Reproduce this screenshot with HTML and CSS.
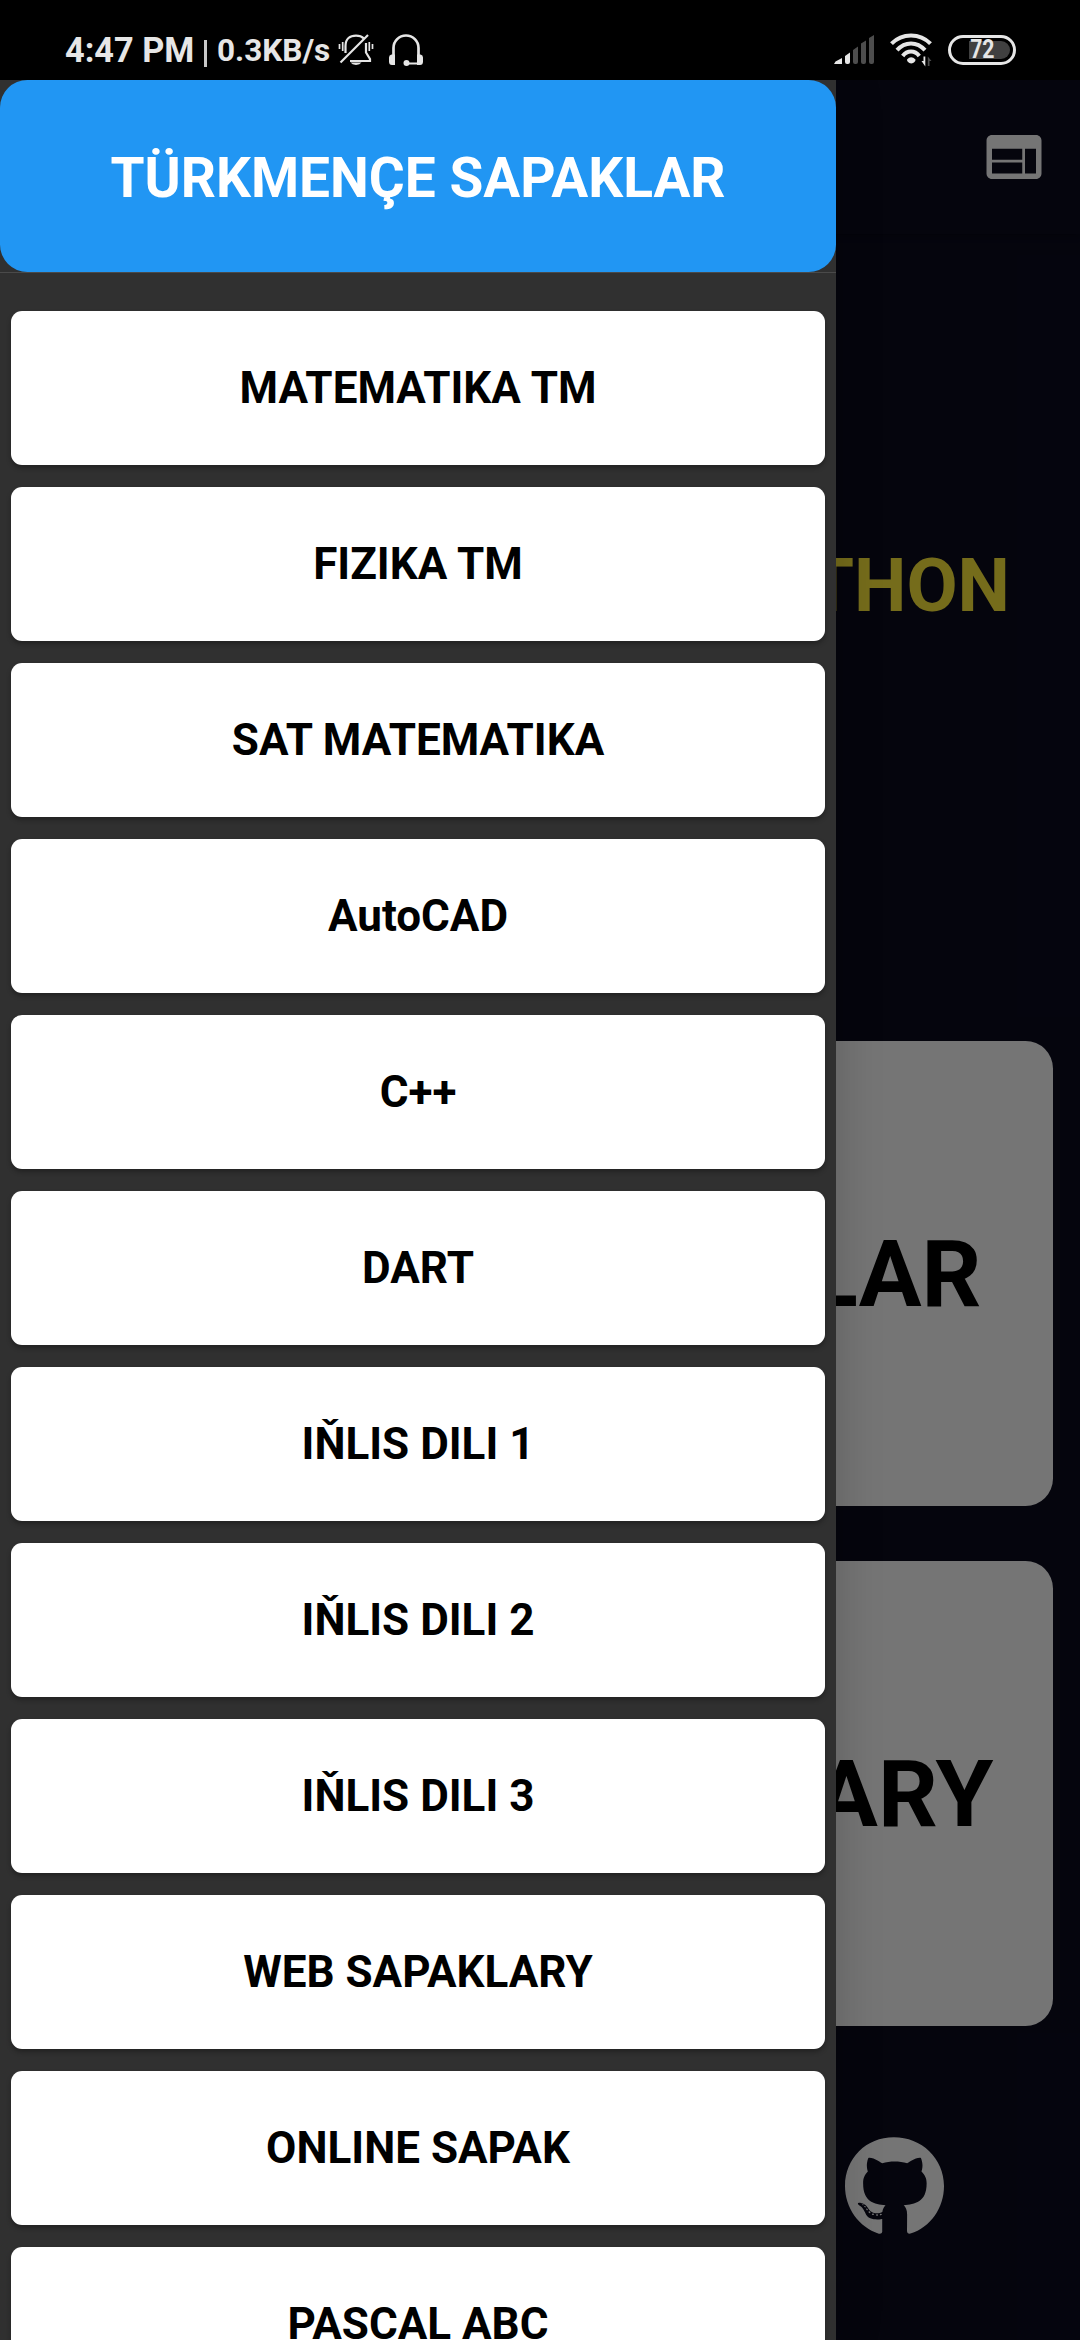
FILE: index.html
```html
<!DOCTYPE html>
<html lang="tk">
<head>
<meta charset="utf-8">
<title>Türkmençe sapaklar</title>
<link rel="stylesheet" href="styles.css">
</head>
<body>
<div class="phone">
  <header class="status">
    <span class="clock">4:47 PM</span>
    <span class="bar"></span>
    <span class="speed">0.3KB/s</span>
    <svg class="bell" viewBox="0 0 36 34" fill="none" stroke="#e6e6e6" stroke-width="2.2">
      <path d="M7.500 20V13C7.500 5.500 12 2.600 18 2.600c3.500 0 6 1 7.800 2.800M28 10v9.500l4 6.500v2H12"/>
      <path d="M2.500 29.500 30 2"/>
      <path d="M1.500 11v5M4.700 9v9M31.300 9v9M34.500 11v5" stroke-width="1.700"/>
      <path d="M12.500 29.500h11a6 4 0 0 1-11 0z" fill="#e6e6e6" stroke="none"/>
    </svg>
    <svg class="headset" viewBox="0 0 36 34" fill="none" stroke="#e6e6e6" stroke-width="2.700">
      <path d="M5.500 24V15a12.500 12.500 0 0 1 25 0v9"/>
      <path d="M18 30.500h12" stroke-width="2"/>
      <path d="M1 24.500q0-2.500 2.500-3H7V32H4q-3 0-3-3.500zM35 24.500q0-2.500-2.500-3H29V32h3q3 0 3-3.500z" fill="#e6e6e6" stroke="none"/>
      <circle cx="18.500" cy="30" r="3" fill="#e6e6e6" stroke="none"/>
    </svg>
    <span class="grow"></span>
    <svg class="signal" viewBox="0 0 40 30">
      <path fill="#e6e6e6" d="M0 29 1.500 26.500 8 23v6zM11 21l5-3.500V27q0 2-2 2h-1q-2 0-2-2z"/>
      <path fill="#4d4d4d" d="M19 15l5-3.500V27q0 2-2 2h-1q-2 0-2-2zM27 8.500l5-3V27q0 2-2 2h-1q-2 0-2-2zM35 3l5-3v27q0 2-2 2h-1q-2 0-2-2z"/>
    </svg>
    <svg class="wifi" viewBox="0 0 42 34" fill="none" stroke="#e6e6e6" stroke-width="4">
      <path d="M1.500 10.700Q9.500 2.500 21 2.500t19.500 8.200M7 17.200q6-6.700 14-6.700t14 6.700M12.700 23q3.300-4.500 8.300-4.500t8.300 4.500"/>
      <path d="M17 26.500q4-4.500 8.500 0 0 3-4.250 4Q17 29.500 17 26.500z" fill="#e6e6e6" stroke="none"/>
      <path d="M35.300 23.500v10L31.500 28h2v-4.500z" fill="#e6e6e6" stroke="none"/>
      <path d="M37.800 33v-9.500L41.500 28h-2v5z" fill="#4d4d4d" stroke="none"/>
    </svg>
    <div class="battery"><span class="charge"></span><span class="level">72</span></div>
  </header>

  <div class="app">
    <main class="home">
      <div class="appbar">
        <svg class="web" viewBox="0 0 24 24"><path fill="#fff" d="M20 4H4c-1.100 0-1.990.9-1.990 2L2 18c0 1.100.9 2 2 2h16c1.100 0 2-.9 2-2V6c0-1.100-.9-2-2-2zm-5 14H4v-4h11v4zm0-5H4V9h11v4zm5 5h-4V9h4v9z"/></svg>
      </div>
      <div class="banner">THON</div>
      <div class="tile tile-lessons">LAR</div>
      <div class="tile tile-books">ARY</div>
      <div class="links">
        <svg class="github" viewBox="0 8 496 484"><path fill="#fff" d="M165.900 397.400c0 2-2.300 3.600-5.200 3.600-3.300.3-5.600-1.300-5.600-3.600 0-2 2.300-3.600 5.200-3.600 3-.3 5.600 1.300 5.600 3.600zm-31.100-4.500c-.7 2 1.300 4.300 4.300 4.900 2.600 1 5.600 0 6.200-2s-1.300-4.300-4.300-5.200c-2.600-.7-5.500.3-6.200 2.300zm44.200-1.700c-2.900.7-4.900 2.600-4.600 4.900.3 2 2.900 3.300 5.900 2.600 2.900-.7 4.900-2.600 4.600-4.600-.3-1.900-3-3.200-5.900-2.900zM244.800 8C106.100 8 0 113.300 0 252c0 110.900 69.800 205.800 169.500 239.200 12.800 2.300 17.300-5.600 17.300-12.100 0-6.200-.3-40.400-.3-61.400 0 0-70 15-84.700-29.800 0 0-11.400-29.100-27.800-36.600 0 0-22.900-15.700 1.600-15.400 0 0 24.900 2 38.600 25.800 21.900 38.600 58.600 27.500 72.900 20.900 2.300-16 8.800-27.100 16-33.700-55.900-6.200-112.300-14.300-112.300-110.500 0-27.500 7.600-41.300 23.600-58.900-2.600-6.500-11.100-33.300 2.600-67.900 20.900-6.500 69 27 69 27 20-5.600 41.500-8.500 62.800-8.500s42.800 2.900 62.800 8.500c0 0 48.100-33.600 69-27 13.700 34.700 5.200 61.400 2.600 67.900 16 17.700 25.800 31.500 25.800 58.900 0 96.500-58.900 104.200-114.800 110.400 9.200 7.900 17 22.900 17 46.400 0 33.700-.3 75.400-.3 83.600 0 6.500 4.600 14.400 17.300 12.100C428.200 457.800 496 362.900 496 252 496 113.300 383.500 8 244.800 8zM97.200 352.900c-1.300 1-1 3.300.7 5.200 1.600 1.600 3.900 2.300 5.200 1 1.300-1 1-3.300-.7-5.200-1.600-1.600-3.900-2.300-5.200-1zm-10.800-8.100c-.7 1.300.3 2.900 2.300 3.900 1.600 1 3.600.7 4.300-.7.7-1.300-.3-2.900-2.300-3.900-2-.6-3.600-.3-4.300.7zm32.400 35.600c-1.600 1.300-1 4.300 1.300 6.200 2.300 2.300 5.200 2.600 6.500 1 1.300-1.300.7-4.300-1.300-6.200-2.200-2.300-5.200-2.600-6.500-1zm-11.400-14.700c-1.600 1-1.600 3.600 0 5.900 1.600 2.300 4.300 3.300 5.600 2.300 1.600-1.300 1.600-3.900 0-6.200-1.400-2.300-4-3.300-5.600-2z"/></svg>
      </div>
    </main>
    <div class="scrim"></div>
    <nav class="drawer">
      <h1 class="title">TÜRKMENÇE SAPAKLAR</h1>
      <div class="list">
        <div class="item">MATEMATIKA TM</div>
        <div class="item">FIZIKA TM</div>
        <div class="item">SAT MATEMATIKA</div>
        <div class="item">AutoCAD</div>
        <div class="item">C++</div>
        <div class="item">DART</div>
        <div class="item">IŇLIS DILI 1</div>
        <div class="item">IŇLIS DILI 2</div>
        <div class="item">IŇLIS DILI 3</div>
        <div class="item">WEB SAPAKLARY</div>
        <div class="item">ONLINE SAPAK</div>
        <div class="item">PASCAL ABC</div>
      </div>
    </nav>
  </div>
</div>
</body>
</html>
```
FILE: styles.css
```css
* { box-sizing: border-box; }
body { margin: 0; background: #000; font-family: Roboto, "Noto Sans", sans-serif; }
.phone { width: 1080px; height: 2340px; display: flex; flex-direction: column; overflow: hidden; }

.status { height: 80px; flex: none; display: flex; align-items: center; padding: 20px 64px 0 65px; color: #e6e6e6; font-weight: 700; white-space: nowrap; }
.clock { font-size: 34.3px; line-height: 40px; width: 129px; }
.bar { width: 3px; height: 27px; background: #c8c8c8; margin: 6px 10px 0; }
.speed { font-size: 31.5px; line-height: 40px; width: 121px; padding-top: 1px; }
.bell { width: 36px; height: 34px; }
.headset { width: 36px; height: 34px; margin-left: 14px; }
.grow { flex: 1; }
.signal { width: 40px; height: 30px; }
.wifi { width: 42px; height: 34px; margin-left: 16px; }
.battery { width: 68px; height: 30px; margin-left: 16px; border: 3px solid #e6e6e6; border-radius: 15px; padding: 3px; display: grid; }
.charge, .level { grid-area: 1 / 1; }
.charge { width: 41px; justify-self: end; background: #404040; border-radius: 0 9px 9px 0; }
.level { justify-self: center; align-self: center; font-size: 25px; line-height: 18px; transform: scaleX(0.85); }

.app { flex: 1; min-height: 0; position: relative; }
.home { height: 100%; background: #0b0b1e; display: flex; flex-direction: column; }
.appbar { height: 154px; flex: none; display: flex; align-items: center; justify-content: flex-end; padding-right: 33px; box-shadow: 0 2px 6px rgba(0, 0, 0, 0.3); }
.web { width: 66px; height: 66px; }
.banner { height: 807px; flex: none; display: flex; justify-content: flex-end; padding: 308px 70px 0 0; color: #ffeb3b; font-size: 74.25px; font-weight: 700; line-height: 88px; }
.tile { height: 465px; flex: none; margin: 0 27.5px 55px; background: #fff; border-radius: 27.5px; color: #000; font-size: 93.5px; font-weight: 700; display: flex; align-items: center; justify-content: flex-end; }
.tile-lessons { padding-right: 71px; }
.tile-books { padding-right: 59px; }
.links { display: flex; justify-content: flex-end; padding: 56px 136px 0 0; }
.github { width: 99px; height: 97px; }

.scrim { position: absolute; inset: 0; background: rgba(0, 0, 0, 0.54); }
.drawer { position: absolute; top: 0; bottom: 0; left: 0; width: 836px; background: #303030; box-shadow: 0 0 45px rgba(0, 0, 0, 0.2); clip-path: inset(0 -100px 0 0); }
.title { margin: 0; height: 192px; padding-top: 3px; border-radius: 27.5px; background: #2196f3; color: #fff; font-size: 55px; font-weight: 700; display: flex; align-items: center; justify-content: center; }
.list { border-top: 1px solid #4a4a4a; padding: 38px 11px 0; display: flex; flex-direction: column; gap: 22px; }
.item { height: 154px; flex: none; border-radius: 11px; background: #fff; color: #000; font-size: 44px; font-weight: 700; display: flex; align-items: center; justify-content: center; box-shadow: 0 3px 5px rgba(0, 0, 0, 0.3); }
```
